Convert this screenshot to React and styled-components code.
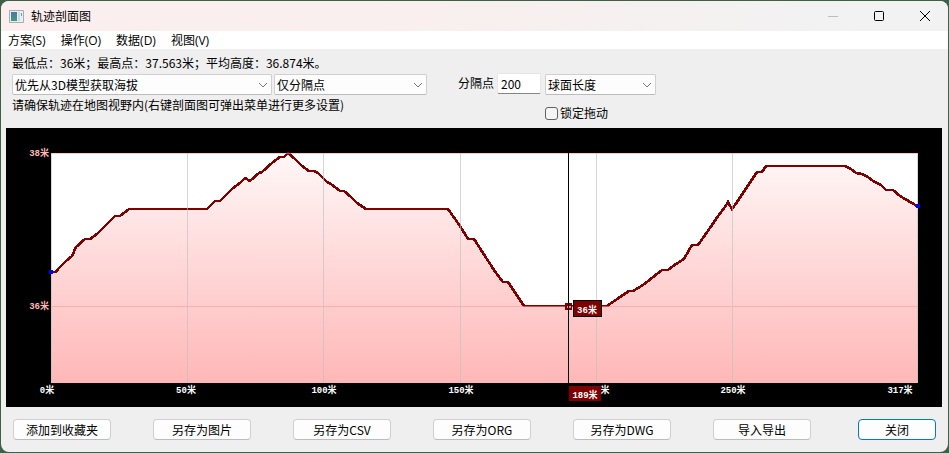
import React, { useState } from "react";
import styled, { createGlobalStyle, css } from "styled-components";

const GlobalStyle = createGlobalStyle`
  * {
    box-sizing: border-box;
  }
  body {
    margin: 0;
    background: #3f5f47;
    color: #000;
    font-family: "Noto Sans CJK SC", sans-serif;
    font-size: 12px;
    line-height: 14px;
  }
  button, input, select {
    font: inherit;
    color: inherit;
  }
`;

const Window = styled.div`
  display: flex;
  flex-direction: column;
  margin: 1px;
  background: #efefef;
  border-radius: 8px;
  overflow: hidden;
`;

const TitleBar = styled.header`
  display: flex;
  align-items: center;
  height: 30px;
  padding-left: 8px;
  background: linear-gradient(90deg, #faefee 0%, #f9efee 40%, #f2f2f2 90%);
`;

const Title = styled.h1`
  flex: 1;
  margin: 0 0 0 7px;
  font-size: 12px;
  font-weight: 400;
  line-height: 16px;
`;

const WindowButton = styled.button`
  display: flex;
  align-items: center;
  justify-content: center;
  width: 46px;
  height: 30px;
  padding: 0;
  border: 0;
  background: transparent;
  color: ${props => (props.$dim ? "#bdbdbd" : "#000")};
`;

const MenuBar = styled.nav`
  display: flex;
  gap: 15px;
  height: 18px;
  padding: 0 7px;
  background: #fff;
  font-family: "Open Sans", "Noto Sans CJK SC", sans-serif;
`;

const MenuItem = styled.button`
  padding: 2px 0 0;
  border: 0;
  background: transparent;
  line-height: 16px;
`;

const Body = styled.main`
  padding: 0 6px 12px 5px;
`;

const Settings = styled.section`
  display: flex;
  align-items: flex-start;
  padding: 7px 6px 8px;
`;

const Source = styled.div`
  display: flex;
  flex-direction: column;
  margin-right: 31px;
`;

const Line = styled.p`
  margin: 0;
  white-space: nowrap;
`;

const Selects = styled.div`
  display: flex;
  gap: 2px;
  margin: 4px 0 3px;
`;

const SelectBox = styled.div`
  display: grid;
  align-items: center;
  width: ${props => props.$width}px;

  > * {
    grid-area: 1 / 1;
  }
  svg {
    justify-self: end;
    margin-right: 4px;
    pointer-events: none;
  }
`;

const Select = styled.select`
  appearance: none;
  width: 100%;
  height: 21px;
  padding: 0 18px 0 2px;
  border: 1px solid #d0d0d0;
  border-bottom-color: #bcbcbc;
  border-radius: 2px;
  background: #fdfdfd;
  line-height: 18px;
`;

const Interval = styled.div`
  display: flex;
  align-items: center;
  gap: 3px;
  height: 22px;
  margin: 16px 4px 0 0;
`;

const NumberInput = styled.input`
  width: 44px;
  height: 21px;
  padding: 0 3px;
  border: 1px solid #e6e6e6;
  border-bottom-color: #868686;
  border-radius: 2px;
  background: #fff;
`;

const Measure = styled.div`
  display: flex;
  flex-direction: column;
  gap: 11px;
  padding-top: 18px;
`;

const CheckLabel = styled.label`
  display: flex;
  align-items: center;
  gap: 2px;
  height: 14px;
`;

const Check = styled.input`
  appearance: none;
  width: 13px;
  height: 13px;
  margin: 0;
  border: 1px solid #626262;
  border-radius: 3px;
  background: #f5f5f5;

  &:checked {
    background: #0067c0;
  }
`;

const Chart = styled.svg`
  display: block;
  width: 100%;
  height: auto;
  background: #000;

  text {
    font-family: "Liberation Mono", "Noto Sans CJK SC", monospace;
    font-size: 9px;
    font-weight: 700;
    fill: #fff;
    text-anchor: middle;
  }
  text.height {
    fill: #ffb9b9;
    text-anchor: end;
  }
`;

const Actions = styled.footer`
  display: flex;
  gap: 42px;
  padding: 12px 6px 0 7px;
`;

const Button = styled.button`
  width: 98px;
  height: 21px;
  padding: 0;
  border: 1px solid #d0d0d0;
  border-bottom-color: #bcbcbc;
  border-radius: 4px;
  background: #fdfdfd;
  white-space: nowrap;
  ${props =>
    props.$primary &&
    css`
      width: 78px;
      margin-left: auto;
      border-color: #0078d4;
    `};
`;

const menus = ["方案(S)", "操作(O)", "数据(D)", "视图(V)"];

const actions = [
  "添加到收藏夹",
  "另存为图片",
  "另存为CSV",
  "另存为ORG",
  "另存为DWG",
  "导入导出"
];

// x, y inside the plot area (867 x 230)
const track = [
  [0, 119], [5, 119], [8, 115], [15, 108], [21, 103], [25, 94], [34, 86],
  [39, 86], [46, 81], [64, 63], [69, 63], [78, 56], [156, 56], [164, 48],
  [169, 48], [182, 35], [189, 30], [194, 25], [199, 28], [208, 20],
  [211, 19], [221, 10], [229, 4], [233, 4], [237, 0], [244, 6], [250, 12],
  [258, 18], [263, 18], [267, 20], [276, 29], [280, 31], [289, 38],
  [293, 38], [300, 44], [306, 50], [315, 56], [397, 56], [409, 73],
  [417, 86], [423, 86], [443, 117], [452, 129], [457, 129], [473, 153],
  [556, 153], [569, 144], [578, 138], [582, 138], [592, 132], [611, 117],
  [617, 117], [625, 111], [633, 106], [641, 92], [647, 92], [654, 82],
  [661, 72], [667, 63], [674, 54], [677, 49], [681, 56], [686, 49],
  [698, 31], [706, 19], [711, 19], [715, 13], [794, 13], [800, 16],
  [805, 20], [811, 21], [817, 24], [822, 28], [830, 32], [835, 37],
  [842, 37], [849, 43], [866, 53]
];

const distances = [
  { x: -4, text: "0米" },
  { x: 135, text: "50米", grid: 136 },
  { x: 273, text: "100米", grid: 272 },
  { x: 410, text: "150米", grid: 409 },
  { x: 546, text: "200米", grid: 545 },
  { x: 682, text: "250米", grid: 681 },
  { x: 849, text: "317米", grid: 866 }
];

const points = track.map(p => p.join(",")).join(" ");

const Chevron = () => (
  <svg width="10" height="6" viewBox="0 0 10 6" aria-hidden="true">
    <path d="M1 1l4 4 4-4" fill="none" stroke="#777" />
  </svg>
);

const AppIcon = () => (
  <svg width="15" height="13" viewBox="0 0 15 13" aria-hidden="true">
    <defs>
      <linearGradient id="pane" x2="0" y2="1">
        <stop offset="0" stopColor="#4779a8" />
        <stop offset="1" stopColor="#459879" />
      </linearGradient>
    </defs>
    <path d="M.5.5h14v12H.5z" fill="#e9eef0" stroke="#a9adb0" />
    <path d="M2 2h6v9H2z" fill="url(#pane)" />
    <path d="M9 2h2v9H9z" fill="#c6dce6" />
    <path d="M12 3h1v3h-1z" fill="#62ae72" />
  </svg>
);

const Dropdown = ({ label, width, options }) => (
  <SelectBox $width={width}>
    <Select aria-label={label}>
      {options.map(option => (
        <option key={option}>{option}</option>
      ))}
    </Select>
    <Chevron />
  </SelectBox>
);

const Profile = () => (
  <Chart viewBox="-45 -25 936 279" role="img" aria-label="轨迹剖面图">
    <defs>
      <linearGradient id="area" gradientUnits="userSpaceOnUse" x1="0" y1="0" x2="0" y2="230">
        <stop offset="0" stopColor="#fff7f7" />
        <stop offset="1" stopColor="#ffb7b7" />
      </linearGradient>
    </defs>
    <g shapeRendering="crispEdges">
      <rect width="867" height="230" fill="#fff" />
      <polygon points={`0,230 ${points} 867,53 867,230`} fill="url(#area)" />
      <polyline points={points} fill="none" stroke="#800000" strokeWidth="2.6" />
      <path d="M0 0h867v1H0zM0 153h867v1H0z" fill="#ff9696" fillOpacity=".55" />
      <path d="M0 0h1v230H0z" fill="#c0c0c0" fillOpacity=".65" />
      {distances.map(
        d =>
          d.grid && (
            <rect key={d.grid} x={d.grid} width="1" height="230" fill="#c0c0c0" fillOpacity=".65" />
          )
      )}
      <path d="M-2 117h4v4h-4zM865 51h4v4h-4z" fill="#00f" />
    </g>
    <text className="height" x="-2" y="3">38米</text>
    <text className="height" x="-2" y="156">36米</text>
    {distances.map(d => (
      <text key={d.text} x={d.x} y="240">{d.text}</text>
    ))}
    <g shapeRendering="crispEdges">
      <path d="M514 150h7v7h-7z" fill="#800000" />
      <path d="M516 153h4v2h-4z" fill="#d89090" />
      <path d="M517 0h1v230h-1z" fill="#000" />
      <path d="M522 147h29v17h-29z" fill="#000" />
      <path d="M523 148h27v15h-27z" fill="#800000" />
      <path d="M518 233h32v15h-32z" fill="#800000" />
    </g>
    <text x="536" y="160">36米</text>
    <text x="534" y="245">189米</text>
  </Chart>
);

const App = () => {
  const [interval, setInterval] = useState("200");
  const [locked, setLocked] = useState(false);

  return (
    <>
      <GlobalStyle />
      <Window>
        <TitleBar>
          <AppIcon />
          <Title>轨迹剖面图</Title>
          <WindowButton $dim aria-label="最小化">
            <svg width="10" height="10" viewBox="0 0 10 10">
              <path d="M0 5.5h10" stroke="currentColor" />
            </svg>
          </WindowButton>
          <WindowButton aria-label="最大化">
            <svg width="10" height="10" viewBox="0 0 10 10">
              <rect x=".5" y=".5" width="9" height="9" rx="1" fill="none" stroke="currentColor" />
            </svg>
          </WindowButton>
          <WindowButton aria-label="关闭窗口">
            <svg width="10" height="10" viewBox="0 0 10 10">
              <path d="M0 0l10 10M10 0L0 10" stroke="currentColor" />
            </svg>
          </WindowButton>
        </TitleBar>
        <MenuBar>
          {menus.map(menu => (
            <MenuItem key={menu}>{menu}</MenuItem>
          ))}
        </MenuBar>
        <Body>
          <Settings>
            <Source>
              <Line>最低点：36米；最高点：37.563米；平均高度：36.874米。</Line>
              <Selects>
                <Dropdown label="海拔来源" width={260} options={["优先从3D模型获取海拔"]} />
                <Dropdown label="取点方式" width={153} options={["仅分隔点"]} />
              </Selects>
              <Line>请确保轨迹在地图视野内(右键剖面图可弹出菜单进行更多设置)</Line>
            </Source>
            <Interval>
              <label htmlFor="interval">分隔点</label>
              <NumberInput
                id="interval"
                value={interval}
                onChange={e => setInterval(e.target.value)}
              />
            </Interval>
            <Measure>
              <Dropdown label="长度类型" width={111} options={["球面长度"]} />
              <CheckLabel>
                <Check
                  type="checkbox"
                  checked={locked}
                  onChange={e => setLocked(e.target.checked)}
                />
                锁定拖动
              </CheckLabel>
            </Measure>
          </Settings>
          <Profile />
          <Actions>
            {actions.map(action => (
              <Button key={action}>{action}</Button>
            ))}
            <Button $primary>关闭</Button>
          </Actions>
        </Body>
      </Window>
    </>
  );
};

export default App;
